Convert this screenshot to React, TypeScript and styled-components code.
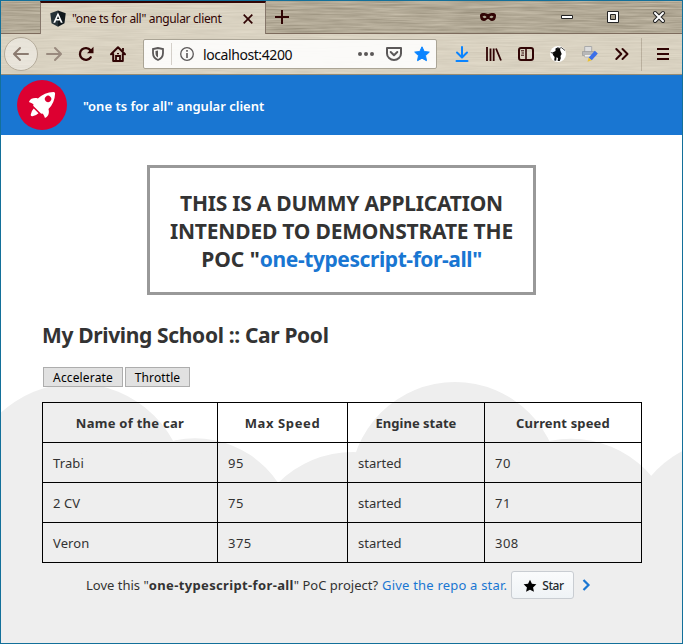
import React from "react";
import styled, { createGlobalStyle } from "styled-components";

const GlobalStyle = createGlobalStyle`
  * { box-sizing: border-box; }
  body { margin: 0; background: #fff; }
`;

const INK = "#300404";

const Window = styled.div`
  width: 683px;
  height: 644px;
  border: 1px solid #13709a;
  overflow: hidden;
  display: flex;
  flex-direction: column;
  font-family: "Noto Sans", "Open Sans", sans-serif;
  font-size: 14px;
  color: #333;
  background: #fff;
`;

const Text = styled.span<{ $track?: number }>`
  letter-spacing: ${(p) => p.$track ?? 0}px;
  white-space: nowrap;
`;

/* ---------- browser chrome ---------- */

const Chrome = styled.div`
  position: relative;
  flex: none;
  height: 74px;
  display: flex;
  flex-direction: column;
  background: #b5ab97;
`;

const Texture = styled.svg`
  position: absolute;
  inset: 0;
  width: 100%;
  height: 100%;
`;

const TabStrip = styled.div`
  position: relative;
  height: 33px;
  display: flex;
  align-items: stretch;
`;

const StripSpace = styled.div<{ $w?: number }>`
  ${(p) => (p.$w ? `width: ${p.$w}px;` : "flex: 1;")}
  border-bottom: 1px solid #7d6b5d;
  display: flex;
  align-items: center;
`;

const Tab = styled.div`
  width: 226px;
  display: flex;
  align-items: center;
  padding: 0 12px 0 9px;
  background: rgba(239, 233, 217, 0.64);
  border: 1px solid #85766a;
  border-top: 2px solid ${INK};
  border-bottom: 0;
  color: ${INK};
  font-size: 12px;
`;

const TabTitle = styled(Text)`
  flex: 1;
  margin-left: 6px;
  line-height: 20px;
`;

const Icon = styled.svg`
  display: block;
  flex: none;
  overflow: visible;
`;

const Controls = styled.div`
  margin-left: auto;
  display: flex;
  align-items: center;
`;

const ControlCell = styled.div<{ $w: number }>`
  width: ${(p) => p.$w}px;
  display: flex;
  justify-content: center;
`;

const Toolbar = styled.div`
  position: relative;
  height: 41px;
  display: flex;
  align-items: center;
  padding-left: 4px;
  background: rgba(239, 233, 217, 0.64);
  border-bottom: 1px solid #968c74;
`;

const Tool = styled.div`
  width: 32px;
  height: 32px;
  display: flex;
  align-items: center;
  justify-content: center;
`;

const BackButton = styled.div`
  width: 34px;
  height: 34px;
  margin: 0 0 0 -1px;
  border-radius: 50%;
  border: 1px solid #b5ac9b;
  background: rgba(255, 255, 255, 0.4);
  display: flex;
  align-items: center;
  justify-content: center;
`;

const UrlBar = styled.div`
  width: 294px;
  height: 30px;
  margin: 0 9px;
  display: flex;
  align-items: center;
  background: rgba(255, 255, 255, 0.88);
  border: 1px solid #aaa495;
  border-radius: 2px;
`;

const UrlCell = styled.div<{ $w: number }>`
  width: ${(p) => p.$w}px;
  display: flex;
  justify-content: center;
`;

const Rule = styled.div<{ $h: number; $m?: string }>`
  width: 1px;
  height: ${(p) => p.$h}px;
  margin: ${(p) => p.$m ?? "0"};
  background: rgba(60, 40, 20, 0.2);
`;

const Url = styled(Text)`
  flex: 1;
  padding: 2px 0 0 1px;
  font-size: 14px;
  line-height: 20px;
  color: #0c0c0d;
`;

/* ---------- page ---------- */

const Header = styled.header`
  flex: none;
  height: 60px;
  display: flex;
  align-items: center;
  padding-left: 16px;
  gap: 16px;
  background: #1976d2;
  color: #fff;
  font-weight: 600;
  font-size: 13px;
`;

const HeaderTitle = styled(Text)`
  padding-top: 2px;
`;

const Page = styled.main`
  position: relative;
  flex: 1;
  padding: 30px 41px 0;
`;

const Clouds = styled.svg`
  position: absolute;
  left: 0;
  top: 0;
`;

const Content = styled.div`
  position: relative;
  display: flex;
  flex-direction: column;
`;

const Notice = styled.div`
  width: 389px;
  height: 130px;
  margin-left: 105px;
  padding-top: 21px;
  border: 3px solid #999;
  background: #fff;
  text-align: center;
  font-size: 21px;
  font-weight: 700;
  line-height: 28px;
`;

const Line = styled.div`
  white-space: nowrap;
`;

const Blue = styled(Text)`
  color: #1976d2;
`;

const Heading = styled.h2`
  margin: 26px 0 0;
  font-size: 21px;
  font-weight: 700;
  line-height: 28px;
`;

const Buttons = styled.div`
  display: flex;
  gap: 2px;
  margin: 18px 0 15px 1px;
`;

const Button = styled.button<{ $w: number }>`
  width: ${(p) => p.$w}px;
  height: 20px;
  padding: 2px 0 0;
  border: 1px solid #adadad;
  background: #e1e1e1;
  color: #000;
  font-family: inherit;
  font-size: 12px;
  line-height: 16px;
`;

const Table = styled.table`
  width: 600px;
  border-collapse: collapse;
  table-layout: fixed;

  th, td {
    height: 40px;
    padding: 0 10px;
    border: 1px solid #000;
    line-height: 20px;
    font-size: 13px;
  }
  th { text-align: center; font-weight: 700; }
  td { text-align: left; }
`;

const Footer = styled.div`
  display: flex;
  align-items: center;
  height: 28px;
  margin: 8px 0 0 44px;
  font-size: 13px;
  line-height: 20px;
`;

const RepoLink = styled(Blue)`
  margin-left: 4px;
`;

const StarButton = styled.div`
  width: 63px;
  height: 28px;
  margin-left: 4px;
  display: flex;
  align-items: center;
  padding: 1px 0 0 11px;
  gap: 5px;
  border: 1px solid #c9cdd2;
  border-radius: 3px;
  background: linear-gradient(#fafbfc, #eff3f6);
  color: #24292e;
  font-size: 12px;
  font-weight: 500;
`;

const Chevron = styled(Icon)`
  margin-left: 8px;
`;

const clouds = [
  [76, 494, 110.7],
  [195, 538, 99.7],
  [353, 558, 106],
  [455, 487, 105],
  [571, 544, 105.3],
  [731, 544, 105],
];

const columns = [
  { label: "Name of the car", w: 175, track: 0.27 },
  { label: "Max Speed", w: 130, track: 0.6 },
  { label: "Engine state", w: 137, track: 0 },
  { label: "Current speed", w: 157, track: 0.15 },
];

const cars = [
  ["Trabi", "95", "started", "70"],
  ["2 CV", "75", "started", "71"],
  ["Veron", "375", "started", "308"],
];

const cellTracking = [0.1, 0.5, 0, 0.5];

const stroke = { fill: "none", stroke: INK, strokeWidth: 2 } as const;
const round = { strokeLinecap: "round", strokeLinejoin: "round" } as const;
const STAR = "M8 .8l2.2 4.7 5.1.6-3.8 3.5 1 5.1L8 12.2l-4.500 2.500 1-5.100L.7 6.100l5.100-.6z";

function Tabs() {
  return (
    <TabStrip>
      <StripSpace $w={39} />
      <Tab>
        <Icon width="16" height="17" viewBox="0 0 16 17">
          <path d="M8 .5L.3 3.200l1.200 10L8 16.700z" fill="#263238" />
          <path d="M8 .5l7.700 2.700-1.200 10L8 16.700z" fill="#10181d" />
          <path d="M8 2.400L3.300 12.800h1.900l.9-2.400h3.800l.9 2.400h1.900zM8 5.900l1.300 3H6.700z" fill="#fff" fillRule="evenodd" />
        </Icon>
        <TabTitle $track={-0.33}>"one ts for all" angular client</TabTitle>
        <Icon width="10" height="10" viewBox="0 0 10 10">
          <path d="M.7.7l8.600 8.600M9.300.7L.7 9.300" {...stroke} strokeWidth={1.7} />
        </Icon>
      </Tab>
      <StripSpace>
        <ControlCell $w={32}>
          <Icon width="14" height="14" viewBox="0 0 14 14">
            <path d="M7 0v14M0 7h14" {...stroke} />
          </Icon>
        </ControlCell>
        <Controls>
          <ControlCell $w={112}>
            <Icon width="16" height="8" viewBox="0 0 16 8">
              <path
                d="M0 2C.5.2 3 0 4.500.1 6 .2 7 1 8 1s2-.8 3.500-.9C13 0 15.500.2 16 2c0 3-.8 6-4 6-2 0-2.700-2-4-2s-2 2-4 2C.8 8 0 5 0 2zm2.500 1.800C3.500 5.700 6 5.500 6.500 4 5.500 2.500 3.400 2.500 2.500 3.800zm11 0c-.9-1.300-3-1.300-4 .2.500 1.500 3 1.700 4-.2z"
                fill={INK}
                fillRule="evenodd"
              />
            </Icon>
          </ControlCell>
          <ControlCell $w={46}>
            <Icon width="12" height="4" viewBox="0 0 12 4">
              <path d="M.5.5h11v3H.5z" fill="#fff" stroke="#222" />
            </Icon>
          </ControlCell>
          <ControlCell $w={46}>
            <Icon width="12" height="12" viewBox="0 0 12 12">
              <path d="M.5.5h11v11H.5zM3.500 3.500v5h5v-5z" fill="#fff" stroke="#222" fillRule="evenodd" />
            </Icon>
          </ControlCell>
          <ControlCell $w={46}>
            <Icon width="12" height="12" viewBox="0 0 12 12">
              <path d="M2 2l8 8M10 2l-8 8" stroke="#222" strokeWidth="4" strokeLinecap="round" />
              <path d="M2 2l8 8M10 2l-8 8" stroke="#fff" strokeWidth="2" strokeLinecap="round" />
            </Icon>
          </ControlCell>
        </Controls>
      </StripSpace>
    </TabStrip>
  );
}

function Tools() {
  return (
    <Toolbar>
      <BackButton>
        <Icon width="16" height="14" viewBox="0 0 16 14">
          <path d="M15 7H1.500M7 1L1 7l6 6" {...stroke} {...round} stroke="#8b7b70" />
        </Icon>
      </BackButton>
      <Tool>
        <Icon width="16" height="14" viewBox="0 0 16 14">
          <path d="M1 7h13.500M9 1l6 6-6 6" {...stroke} {...round} stroke="#998a7e" />
        </Icon>
      </Tool>
      <Tool>
        <Icon width="16" height="16" viewBox="0 0 16 16">
          <path d="M12.700 11.300A5.900 5.900 0 1 1 12.500 4.300" {...stroke} strokeWidth={2.300} strokeLinecap="round" />
          <path d="M15.500.8v6.400H9z" fill={INK} />
        </Icon>
      </Tool>
      <Tool>
        <Icon width="16" height="16" viewBox="0 0 16 16">
          <path d="M1 8.200L8 1.300l7 6.900M3.200 8v7h9.600V8" {...stroke} {...round} />
          <path d="M6 15v-5h4v5M13 2v3" {...stroke} strokeWidth={1.800} />
          <path d="M7 7h2v1.300H7z" fill={INK} />
        </Icon>
      </Tool>
      <UrlBar>
        <UrlCell $w={28}>
          <Icon width="12" height="14" viewBox="0 0 12 14">
            <path d="M6 1L1 2v4c0 3.800 2 5.800 5 7 3-1.200 5-3.200 5-7V2z" {...stroke} stroke="#5b5858" strokeWidth={1.800} />
            <path d="M6 3.500v7C4.200 9.500 3.500 8 3.500 6V4z" fill="#5b5858" />
          </Icon>
        </UrlCell>
        <Rule $h={22} $m="0 0 0 -1px" />
        <UrlCell $w={30}>
          <Icon width="14" height="14" viewBox="0 0 14 14">
            <circle cx="7" cy="7" r="6.300" {...stroke} stroke="#5b5858" strokeWidth={1.300} />
            <path d="M7 6v5M7 3v1.700" {...stroke} stroke="#5b5858" strokeWidth={1.600} />
          </Icon>
        </UrlCell>
        <Url $track={-0.42}>localhost:4200</Url>
        <UrlCell $w={28}>
          <Icon width="16" height="4" viewBox="0 0 16 4">
            <g fill="#5b5858">
              <circle cx="2" cy="2" r="2" />
              <circle cx="8" cy="2" r="2" />
              <circle cx="14" cy="2" r="2" />
            </g>
          </Icon>
        </UrlCell>
        <UrlCell $w={28}>
          <Icon width="16" height="14" viewBox="0 0 16 14">
            <path d="M1 1h14v5.500a7 6.500 0 0 1-14 0z" {...stroke} {...round} stroke="#5b5858" />
            <path d="M4.700 5L8 8.200 11.300 5" {...stroke} {...round} stroke="#5b5858" />
          </Icon>
        </UrlCell>
        <UrlCell $w={28}>
          <Icon width="16" height="16" viewBox="0 0 16 16">
            <path d={STAR} fill="#0a84ff" stroke="#0a84ff" strokeLinejoin="round" />
          </Icon>
        </UrlCell>
      </UrlBar>
      <Tool>
        <Icon width="14" height="16" viewBox="0 0 14 16">
          <path d="M7 1v10M2 6.500l5 5 5-5M1.500 15h11" {...stroke} {...round} stroke="#0a84ff" />
        </Icon>
      </Tool>
      <Tool>
        <Icon width="16" height="14" viewBox="0 0 16 14">
          <path d="M1 0v14M4.500 1.500V14M7.700 1.500V14M10 1.500l5 12" {...stroke} strokeWidth={1.800} />
        </Icon>
      </Tool>
      <Tool>
        <Icon width="16" height="14" viewBox="0 0 16 14">
          <rect x="1" y="1" width="14" height="12" rx="2" {...stroke} />
          <path d="M8 1v12" {...stroke} strokeWidth={1.600} />
          <path d="M3 3.800h3M3.500 6h2.500M3 8.200h3" {...stroke} strokeWidth={1} />
        </Icon>
      </Tool>
      <Tool>
        <Icon width="16" height="16" viewBox="0 0 16 16">
          <circle cx="8" cy="8" r="8" fill="#fff" />
          <path d="M5.500 2.500L8 1.300l2 1.200.3 2 1.400 3.500-1.200 2 .3 2.300-1 2.700H7.700l.3-3-1.500-.8-.3 3.500-2-.2.400-3.500L3 9l-.5-2.500 3-1.500z" fill="#0a0a0a" />
          <path d="M7 3l4.500-1.300 3.500 2.800M.8 6.500L4 7.500" fill="none" stroke="#333" strokeWidth=".9" />
        </Icon>
      </Tool>
      <Tool>
        <Icon width="16" height="16" viewBox="0 0 16 16">
          <path d="M2.700.5h7v6h-7z" fill="#ddd" stroke="#aaa" />
          <path d="M.5 5.500h12l1.500 1v3H.5z" fill="#b8b8b8" stroke="#999" strokeWidth=".7" />
          <path d="M2.500 8.500h7v2.500h-7z" fill="#eee" stroke="#aaa" strokeWidth=".7" />
          <path d="M12.800 4.800l3 2.700-6 6.800-3.200-2.600z" fill="#3b6fe8" />
          <path d="M6.600 11.700l3.200 2.600-4.300 1.500z" fill="#ecc22e" />
        </Icon>
      </Tool>
      <Tool>
        <Icon width="14" height="12" viewBox="0 0 14 12">
          <path d="M1.300 1l5 5-5 5M7.500 1l5 5-5 5" {...stroke} {...round} />
        </Icon>
      </Tool>
      <Rule $h={33} $m="0 5px 0 3px" />
      <Tool>
        <Icon width="12" height="12" viewBox="0 0 12 12">
          <path d="M0 1h12M0 6h12M0 11h12" {...stroke} />
        </Icon>
      </Tool>
    </Toolbar>
  );
}

export default function App() {
  return (
    <Window>
      <GlobalStyle />
      <Chrome>
        <Texture>
          <filter id="brushed" x="0" y="0" width="100%" height="100%" colorInterpolationFilters="sRGB">
            <feTurbulence type="fractalNoise" baseFrequency="0.022 0.6" numOctaves="3" seed="4" />
            <feColorMatrix values="0.24 0 0 0 0.575  0.24 0 0 0 0.54  0.24 0 0 0 0.465  0 0 0 0 1" />
          </filter>
          <rect width="100%" height="100%" filter="url(#brushed)" />
        </Texture>
        <Tabs />
        <Tools />
      </Chrome>
      <Header>
        <Icon width="50" height="50" viewBox="0 0 101.678 101.678">
          <circle cx="50.839" cy="50.839" r="50.839" fill="#dd0031" />
          <g transform="translate(24.185 24.185)" fill="#fff">
            <path
              transform="translate(0.371 3.363)"
              d="M3.400,42.615a3.084,3.084,0,0,0,3.553,3.553,21.419,21.419,0,0,0,12.215-6.107L9.511,30.400A21.419,21.419,0,0,0,3.400,42.615Z"
            />
            <path d="M53.300,3.221A3.090,3.090,0,0,0,50.081,0,48.227,48.227,0,0,0,18.322,13.437c-6-1.666-14.991-1.221-18.322,7.218A33.892,33.892,0,0,1,9.439,25.100l-.333.666a3.013,3.013,0,0,0,.555,3.553L23.985,43.641a2.900,2.900,0,0,0,3.553.555l.666-.333A33.892,33.892,0,0,1,32.647,53.300c8.550-3.664,8.884-12.326,7.218-18.322A48.227,48.227,0,0,0,53.300,3.221ZM34.424,9.772a6.439,6.439,0,1,1,9.106,9.106,6.368,6.368,0,0,1-9.106,0A6.467,6.467,0,0,1,34.424,9.772Z" />
          </g>
        </Icon>
        <HeaderTitle>"one ts for all" angular client</HeaderTitle>
      </Header>
      <Page>
        <Clouds width="681" height="508" viewBox="1 135 681 508">
          <g fill="#eee">
            {clouds.map(([cx, cy, r]) => (
              <circle key={cx} cx={cx} cy={cy} r={r} />
            ))}
            <rect x="0" y="484" width="683" height="160" />
          </g>
        </Clouds>
        <Content>
          <Notice>
            <Line><Text $track={-0.23}>THIS IS A DUMMY APPLICATION</Text></Line>
            <Line><Text $track={-0.2}>INTENDED TO DEMONSTRATE THE</Text></Line>
            <Line>POC "<Blue $track={-0.42}>one-typescript-for-all"</Blue></Line>
          </Notice>
          <Heading><Text $track={-0.35}>My Driving School :: Car Pool</Text></Heading>
          <Buttons>
            <Button $w={80}><Text $track={0.15}>Accelerate</Text></Button>
            <Button $w={65}><Text $track={0.1}>Throttle</Text></Button>
          </Buttons>
          <Table>
            <colgroup>
              {columns.map((c) => (
                <col key={c.label} width={c.w} />
              ))}
            </colgroup>
            <thead>
              <tr>
                {columns.map((c) => (
                  <th key={c.label}><Text $track={c.track}>{c.label}</Text></th>
                ))}
              </tr>
            </thead>
            <tbody>
              {cars.map((car) => (
                <tr key={car[0]}>
                  {car.map((value, i) => (
                    <td key={i}><Text $track={cellTracking[i]}>{value}</Text></td>
                  ))}
                </tr>
              ))}
            </tbody>
          </Table>
          <Footer>
            <Text>Love this "</Text>
            <Text as="b" $track={0.36}>one-typescript-for-all</Text>
            <Text>" PoC project?</Text>
            <RepoLink $track={0.2}>Give the repo a star.</RepoLink>
            <StarButton>
              <Icon width="14" height="14" viewBox="0 0 16 16">
                <path d={STAR} fill="#000" />
              </Icon>
              <Text $track={-0.4}>Star</Text>
            </StarButton>
            <Chevron width="8" height="12" viewBox="0 0 8 12">
              <path d="M1.500 1l5 5-5 5" fill="none" stroke="#1976d2" strokeWidth="2.200" />
            </Chevron>
          </Footer>
        </Content>
      </Page>
    </Window>
  );
}
